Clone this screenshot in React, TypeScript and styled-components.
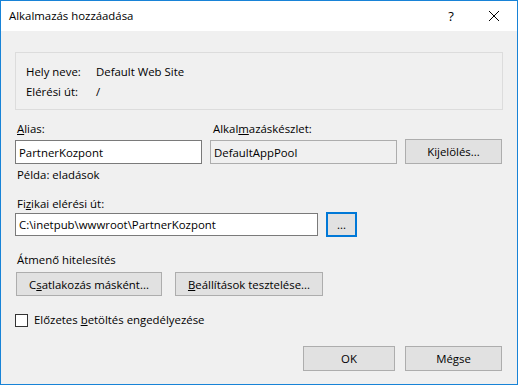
import React from 'react';
import styled, { createGlobalStyle } from 'styled-components';

const FONT_SIZE = '11.4px';

const GlobalStyle = createGlobalStyle`
  html, body {
    margin: 0;
    padding: 0;
    background: #ffffff;
  }
  body {
    font-family: 'Open Sans', 'Liberation Sans', sans-serif;
    font-size: ${FONT_SIZE};
    color: #000000;
  }
  * {
    box-sizing: border-box;
  }
`;

const App: React.FC = () => {
  return (
    <>
      <GlobalStyle />
      <Window>
        <TitleBar>
          <Title>Alkalmazás hozzáadása</Title>
          <TitleButtons>
            <HelpGlyph>?</HelpGlyph>
            <CloseIcon width="12" height="12" viewBox="0 0 12 12">
              <path d="M1 1 L11 11 M11 1 L1 11" stroke="#000" strokeWidth="1" fill="none" />
            </CloseIcon>
          </TitleButtons>
        </TitleBar>

        <Content>
          <InfoBox>
            <InfoRow>
              <InfoKey>Hely neve:</InfoKey>
              <span>Default Web Site</span>
            </InfoRow>
            <InfoRow>
              <InfoKey>Elérési út:</InfoKey>
              <span>/</span>
            </InfoRow>
          </InfoBox>

          <FieldGrid>
            <FieldLabel>
              <u>A</u>lias:
            </FieldLabel>
            <FieldLabel $indent={3}>
              Alkal<u>m</u>azáskészlet:
            </FieldLabel>
            <span />
            <TextInput readOnly value="PartnerKozpont" />
            <TextInput readOnly $disabled value="DefaultAppPool" />
            <Button $height={25}>Kijelölés...</Button>
          </FieldGrid>
          <Hint>Példa: eladások</Hint>

          <SectionLabel $top={13}>
            Fi<u>z</u>ikai elérési út:
          </SectionLabel>
          <PathRow>
            <TextInput readOnly value="C:\inetpub\wwwroot\PartnerKozpont" />
            <Button $width={31} $height={25} $focused>
              ...
            </Button>
          </PathRow>

          <SectionLabel $top={15}>Átmenő hitelesítés</SectionLabel>
          <ButtonRow>
            <Button $width={146}>
              C<u>s</u>atlakozás másként...
            </Button>
            <Button $width={148}>
              <u>B</u>eállítások tesztelése...
            </Button>
          </ButtonRow>

          <CheckRow>
            <CheckBox />
            <span>
              Előzetes <u>b</u>etöltés engedélyezése
            </span>
          </CheckRow>

          <Footer>
            <Button $width={92} $height={25}>OK</Button>
            <Button $width={97} $height={25}>Mégse</Button>
          </Footer>
        </Content>
      </Window>
    </>
  );
};

export default App;

const Window = styled.div`
  width: 518px;
  height: 385px;
  border: 1px solid #1883d7;
  background: #f0f0f0;
  display: flex;
  flex-direction: column;
`;

const TitleBar = styled.div`
  height: 30px;
  background: #ffffff;
  display: flex;
  align-items: center;
  justify-content: space-between;
  padding-left: 8px;
`;

const Title = styled.div`
  font-size: ${FONT_SIZE};
  line-height: 16px;
`;

const TitleButtons = styled.div`
  display: flex;
  align-items: center;
  height: 100%;
`;

const HelpGlyph = styled.span`
  width: 46px;
  text-align: center;
  font-size: 13px;
  padding-right: 8px;
`;

const CloseIcon = styled.svg`
  margin: 0 17px 0 10px;
`;

const Content = styled.div`
  flex: 1;
  display: flex;
  flex-direction: column;
  padding: 21px 14px 0 14px;
`;

const InfoBox = styled.div`
  border: 1px solid #dcdcdc;
  padding: 9px 10px 7px;
  margin-bottom: 11px;
`;

const InfoRow = styled.div`
  display: flex;
  line-height: 20px;
`;

const InfoKey = styled.span`
  width: 70px;
`;

const FieldGrid = styled.div`
  display: grid;
  grid-template-columns: 187px 187px 97px;
  column-gap: 8px;
  row-gap: 2px;
  align-items: end;
  width: 488px;
`;

const FieldLabel = styled.div<{ $indent?: number }>`
  line-height: 16px;
  padding-left: ${(p) => p.$indent ?? 2}px;
`;

const TextInput = styled.input<{ $disabled?: boolean }>`
  height: 24px;
  width: 100%;
  font-family: inherit;
  font-size: ${FONT_SIZE};
  color: #000;
  padding: 0 3px;
  margin: 0;
  outline: none;
  border: 1px solid ${(p) => (p.$disabled ? '#adadad' : '#7a7a7a')};
  background: ${(p) => (p.$disabled ? '#f0f0f0' : '#ffffff')};
`;

const Button = styled.button<{ $width?: number; $height?: number; $focused?: boolean }>`
  width: ${(p) => (p.$width ? `${p.$width}px` : '100%')};
  height: ${(p) => p.$height ?? 24}px;
  flex-shrink: 0;
  margin: 0;
  padding: 0;
  font-family: inherit;
  font-size: ${FONT_SIZE};
  color: #000;
  background: #e1e1e1;
  border: ${(p) => (p.$focused ? '2px solid #0078d7' : '1px solid #adadad')};
`;

const Hint = styled.div`
  line-height: 16px;
  margin-top: 3px;
  padding-left: 2px;
`;

const SectionLabel = styled.div<{ $top: number }>`
  line-height: 16px;
  margin-top: ${(p) => p.$top}px;
  padding-left: 2px;
`;

const PathRow = styled.div`
  display: flex;
  align-items: center;
  gap: 8px;

  & > input {
    width: 303px;
    height: 23px;
  }
`;

const ButtonRow = styled.div`
  display: flex;
  gap: 13px;
  margin-top: 4px;
  padding-left: 1px;
`;

const CheckRow = styled.label`
  display: flex;
  align-items: center;
  gap: 6px;
  margin-top: 16px;
  line-height: 16px;
`;

const CheckBox = styled.span`
  width: 13px;
  height: 13px;
  border: 1px solid #333333;
  background: #ffffff;
`;

const Footer = styled.div`
  display: flex;
  justify-content: flex-end;
  gap: 10px;
  margin-top: 18px;
  padding-right: 1px;
`;
